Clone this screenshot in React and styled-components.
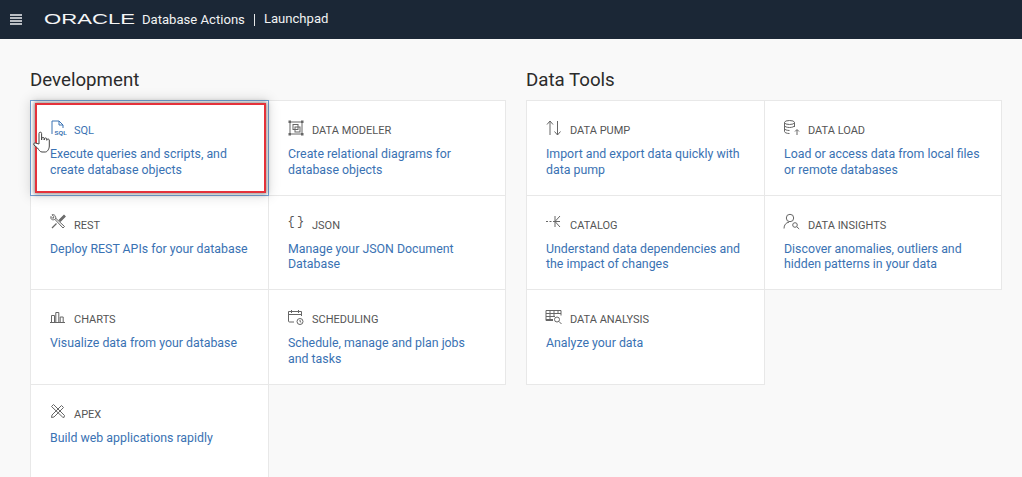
import React from 'react';
import styled, { createGlobalStyle } from 'styled-components';

const GlobalStyle = createGlobalStyle`
    html, body {
        margin: 0;
        height: 100%;
        overflow: hidden;
        background: #f9f9f9;
    }
`;

const Page = styled.div`
    position: relative;
    height: 477px;
    overflow: hidden;
    font-family: Roboto, "Open Sans", sans-serif;
`;

const Header = styled.header`
    display: flex;
    align-items: center;
    height: 39px;
    background: #1b2736;
    color: #fff;
    font-family: Roboto, "Liberation Sans", sans-serif;
`;

const Burger = styled.div`
    display: flex;
    flex-direction: column;
    gap: 1px;
    width: 12px;
    margin: 0 22px 0 10px;

    span {
        height: 2px;
        background: #b9bdc3;
    }
`;

const Logo = styled.svg`
    display: block;
    width: 94px;
    height: 18px;
    margin: -1px 4px 0 0;
`;

const HeaderText = styled.span`
    font-size: 13.1px;
    color: #f2f3f4;
    position: relative;
    top: ${props => props.$up ? '-1px' : '0'};
`;

const Divider = styled.span`
    width: 1px;
    height: 12px;
    background: #e6e7e9;
    margin: 0 9px 0 9px;
`;

const Content = styled.main`
    display: flex;
    gap: 20px;
    padding: 29px 0 0 30px;
`;

const Section = styled.section`
    width: 476px;
`;

const SectionTitle = styled.h2`
    margin: 0 0 6px;
    height: 26px;
    font-size: 18.7px;
    line-height: 24px;
    font-weight: 400;
    color: #2b2b2b;
`;

const Grid = styled.div`
    display: grid;
    grid-template-columns: 238px 238px;
    grid-auto-rows: 94.5px;
`;

const Card = styled.div`
    position: relative;
    z-index: ${props => props.$active ? 1 : 0};
    box-sizing: border-box;
    margin: 0 -1px -1px 0;
    padding: 18px 14px 0 19px;
    background: #fff;
    border: 1px solid ${props => props.$active ? '#6f9dd0' : '#e8e8e8'};
    box-shadow: ${props => props.$active ? '0 0 12px rgba(0, 0, 0, 0.14)' : 'none'};

    &:nth-child(even) {
        margin-right: 0;
    }
`;

const CardHead = styled.div`
    display: flex;
    align-items: center;
    height: 21px;
    margin-bottom: 7px;
`;

const IconBox = styled.svg`
    flex: none;
    width: 18px;
    height: 18px;
    margin: -4px 7px 0 -1px;
    fill: none;
    stroke: #666;
    stroke-width: 1;
`;

const CardLabel = styled.span`
    padding-top: 2px;
    font-size: 11px;
    color: ${props => props.$active ? '#3a72b3' : '#555'};
`;

const CardText = styled.p`
    margin: 0;
    max-width: 200px;
    font-size: 12.35px;
    line-height: 15.5px;
    color: #3a72b3;
`;

const Highlight = styled.div`
    position: absolute;
    left: 35px;
    top: 103px;
    width: 231px;
    height: 90px;
    box-sizing: border-box;
    border: 2.5px solid #e5323a;
    box-shadow: 0 0 4px 1px rgba(60, 60, 60, 0.6);
    pointer-events: none;
    z-index: 2;
`;

const Cursor = styled.svg`
    position: absolute;
    left: 32px;
    top: 130px;
    width: 20px;
    height: 25px;
    z-index: 3;
`;

const icons = {
    sql: <>
        <path d="M3 15V2h7l4 4v3M10 2v4h4" stroke="#3a72b3" />
        <text x="5.500" y="16" fontSize="6" fontWeight="700" fill="#3a72b3" stroke="none" fontFamily="Liberation Sans">SQL</text>
    </>,
    modeler: <>
        <rect x="3" y="3" width="12" height="12" />
        <path d="M1.500 1.500h2.500v2.500H1.500zM14 1.500h2.500v2.500H14zM1.500 14h2.500v2.500H1.500zM14 14h2.500v2.500H14z" fill="#666" stroke="none" />
        <rect x="6" y="5.500" width="5" height="5" />
        <rect x="8" y="8" width="5" height="5" />
    </>,
    rest: <>
        <path d="M6 6.500 14 15l1.500-1.500L7 5.500" />
        <path d="M6.500 6C7.500 3.500 5.500 1 3 1.800l2 2L4 5.500 2 3.500C1 6 3.500 8 6.500 6Z" />
        <path d="M10 7.500 15 2.500l1 1L11 8.500M7.500 10.500 3 15" strokeWidth="1.300" />
    </>,
    json: <>
        <text x="0.500" y="11.500" fontSize="12" fill="#555" stroke="none" fontFamily="Liberation Mono">{'{'}</text>
        <text x="10" y="11.500" fontSize="12" fill="#555" stroke="none" fontFamily="Liberation Mono">{'}'}</text>
    </>,
    charts: <path d="M1 14.500h15M2.500 14V7.500h3V14M6.800 14V4.500h3V14M11.200 14V9h3v5" />,
    scheduling: <>
        <path d="M7 14H2.500a1 1 0 0 1-1-1V3.500h13V8M1.500 6.500h13M4.500 2v3M11.500 2v3" />
        <circle cx="13" cy="13.500" r="3" />
        <path d="M13 12v1.600l1.200.6" />
    </>,
    apex: <>
        <path d="M2.500 4.500 4.500 2.500 15.500 13.500 15 15.500 13.500 15Z" />
        <path d="M12.500 3.500 14.500 5.500 5 15 2.500 15.500 3 13Z" />
    </>,
    pump: <path d="M5 16V2.500M2 5.500l3-3.500 3 3.500M12.500 2v14M9.500 12.500l3 3.500 3-3.500" />,
    catalog: <path d="M1 8.500h2M4.500 8.500h2M8 8.500h7M10 3v11M15 3 10 8.500l5 5.500" />,
    analysis: <>
        <path d="M1 2.500h15v5M1 2.500v10h7M1 5.500h15M1 8.500h9M1 11.500h7M5 2.500v10M9 2.500v6M13 2.500v3" />
        <circle cx="12" cy="11.500" r="2.500" />
        <path d="m14 13.500 2.500 2.500" />
    </>,
    load: <>
        <ellipse cx="6.500" cy="3.500" rx="5" ry="2" />
        <path d="M1.500 3.500v9c0 1 2 2 5 2M11.500 3.500V8M1.500 6.500c0 1.200 2.500 2 5 2s5-.8 5-2M1.500 9.500c0 1.200 2.500 2 5 2" />
        <path d="M14 16v-5M12 12.500l2-2 2 2" />
    </>,
    insights: <>
        <circle cx="7" cy="5" r="3.700" />
        <path d="M1 15.500c0-3.500 2-6 5-6.300" />
        <circle cx="12" cy="12" r="2.300" />
        <path d="m13.700 13.700 2.500 2.300" />
    </>,
};

const development = [
    { icon: 'sql', label: 'SQL', text: 'Execute queries and scripts, and create database objects', active: true },
    { icon: 'modeler', label: 'DATA MODELER', text: 'Create relational diagrams for database objects' },
    { icon: 'rest', label: 'REST', text: 'Deploy REST APIs for your database' },
    { icon: 'json', label: 'JSON', text: 'Manage your JSON Document Database' },
    { icon: 'charts', label: 'CHARTS', text: 'Visualize data from your database' },
    { icon: 'scheduling', label: 'SCHEDULING', text: 'Schedule, manage and plan jobs and tasks' },
    { icon: 'apex', label: 'APEX', text: 'Build web applications rapidly' },
];

const dataTools = [
    { icon: 'pump', label: 'DATA PUMP', text: 'Import and export data quickly with data pump' },
    { icon: 'load', label: 'DATA LOAD', text: 'Load or access data from local files or remote databases' },
    { icon: 'catalog', label: 'CATALOG', text: 'Understand data dependencies and the impact of changes' },
    { icon: 'insights', label: 'DATA INSIGHTS', text: 'Discover anomalies, outliers and hidden patterns in your data' },
    { icon: 'analysis', label: 'DATA ANALYSIS', text: 'Analyze your data' },
];

const Tile = ({ item }) => (
    <Card $active={item.active}>
        <CardHead>
            <IconBox viewBox="0 0 18 18">{icons[item.icon]}</IconBox>
            <CardLabel $active={item.active}>{item.label}</CardLabel>
        </CardHead>
        <CardText>{item.text}</CardText>
    </Card>
);

const App = () => {
    return (
        <Page>
            <GlobalStyle />
            <Header>
                <Burger><span /><span /><span /><span /></Burger>
                <Logo viewBox="0 0 94 18">
                    <text x="0" y="14" fontSize="15" fontFamily="Liberation Sans" fill="#f4f5f6" textLength="91" lengthAdjust="spacingAndGlyphs">ORACLE</text>
                </Logo>
                <HeaderText>Database Actions</HeaderText>
                <Divider />
                <HeaderText $up>Launchpad</HeaderText>
            </Header>
            <Content>
                <Section>
                    <SectionTitle>Development</SectionTitle>
                    <Grid>
                        {development.map(item => <Tile key={item.label} item={item} />)}
                    </Grid>
                </Section>
                <Section>
                    <SectionTitle>Data Tools</SectionTitle>
                    <Grid>
                        {dataTools.map(item => <Tile key={item.label} item={item} />)}
                    </Grid>
                </Section>
            </Content>
            <Highlight />
            <Cursor viewBox="0 0 20 25">
                <path d="M7 14V3.500a1.300 1.300 0 0 1 2.600 0V10l.2-1.800a1.200 1.200 0 0 1 2.300 0l.1 1.800.2-1.200a1.200 1.200 0 0 1 2.300 0l.1 1.500.3-.7a1.200 1.200 0 0 1 2.200.4v6c0 3-2 6-4 6H10c-2 0-3-2-4.500-4L2 15c-1-1.500.8-2.800 2-1.800Z" fill="#fff" stroke="#444" strokeWidth="1" />
            </Cursor>
        </Page>
    );
};

export default App;
